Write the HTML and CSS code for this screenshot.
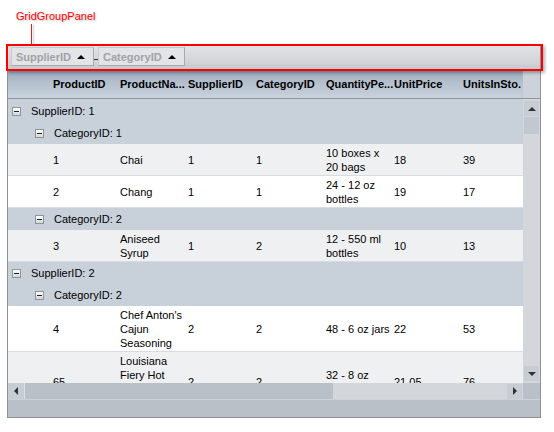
FILE: index.html
```html
<!DOCTYPE html>
<html>
<head>
<meta charset="utf-8">
<link rel="stylesheet" href="styles.css">
</head>
<body>
<div class="callout">
  <div class="callout-label">GridGroupPanel</div>
  <div class="callout-line"></div>
</div>
<div class="grid">
  <div class="group-panel">
    <div class="gp-btn"><span>SupplierID</span><span class="tri-up"></span></div>
    <div class="gp-dash"></div>
    <div class="gp-btn"><span>CategoryID</span><span class="tri-up"></span></div>
  </div>
  <div class="highlight"></div>
  <div class="header">
    <div class="cols">
      <div class="c"></div>
      <div class="c">ProductID</div>
      <div class="c">ProductNa...</div>
      <div class="c">SupplierID</div>
      <div class="c">CategoryID</div>
      <div class="c">QuantityPe...</div>
      <div class="c">UnitPrice</div>
      <div class="c">UnitsInSto.</div>
    </div>
    <div class="hdr-corner"></div>
  </div>
  <div class="body">
    <div class="rows">
      <div class="grp lvl1"><span class="exp"></span>SupplierID: 1</div>
      <div class="grp lvl2"><span class="exp"></span>CategoryID: 1</div>
      <div class="row alt cols">
        <div class="c"></div><div class="c">1</div><div class="c">Chai</div><div class="c">1</div><div class="c">1</div><div class="c">10 boxes x<br>20 bags</div><div class="c">18</div><div class="c">39</div>
      </div>
      <div class="row cols">
        <div class="c"></div><div class="c">2</div><div class="c">Chang</div><div class="c">1</div><div class="c">1</div><div class="c">24 - 12 oz<br>bottles</div><div class="c">19</div><div class="c">17</div>
      </div>
      <div class="grp lvl2"><span class="exp"></span>CategoryID: 2</div>
      <div class="row alt cols">
        <div class="c"></div><div class="c">3</div><div class="c">Aniseed<br>Syrup</div><div class="c">1</div><div class="c">2</div><div class="c">12 - 550 ml<br>bottles</div><div class="c">10</div><div class="c">13</div>
      </div>
      <div class="grp lvl1"><span class="exp"></span>SupplierID: 2</div>
      <div class="grp lvl2"><span class="exp"></span>CategoryID: 2</div>
      <div class="row cols">
        <div class="c"></div><div class="c">4</div><div class="c">Chef Anton's<br>Cajun<br>Seasoning</div><div class="c">2</div><div class="c">2</div><div class="c">48 - 6 oz jars</div><div class="c">22</div><div class="c">53</div>
      </div>
      <div class="row alt cols">
        <div class="c"></div><div class="c">65</div><div class="c">Louisiana<br>Fiery Hot<br>Pepper<br>Sauce</div><div class="c">2</div><div class="c">2</div><div class="c">32 - 8 oz<br>bottles</div><div class="c">21.05</div><div class="c">76</div>
      </div>
    </div>
    <div class="vscroll">
      <div class="sb-btn"><span class="tri-up dark"></span></div>
      <div class="vthumb"></div>
      <div class="vtrack"></div>
      <div class="sb-btn"><span class="tri-down"></span></div>
    </div>
  </div>
  <div class="hscroll">
    <div class="hbar">
      <div class="sb-btn h"><span class="tri-left"></span></div>
      <div class="hthumb"></div>
      <div class="htrack"></div>
      <div class="sb-btn h"><span class="tri-right"></span></div>
    </div>
    <div class="corner"></div>
  </div>
  <div class="footer"></div>
</div>
</body>
</html>
```

FILE: styles.css
```css
html, body {
  margin: 0;
  padding: 0;
  background: #ffffff;
}
body {
  font-family: "Liberation Sans", Arial, sans-serif;
  font-size: 11px;
  color: #000;
  width: 554px;
  height: 432px;
  overflow: hidden;
}
.callout {
  height: 44px;
  position: relative;
}
.callout-label {
  padding: 9px 0 0 16px;
  height: 15px;
  line-height: 15px;
  color: #ff0000;
  text-shadow: 1px 1px 2px rgba(0,0,0,0.25);
}
.callout-line {
  margin-left: 31px;
  width: 1px;
  height: 20px;
  background: #e02020;
  box-shadow: 2px 1px 2px rgba(0,0,0,0.25);
}
.grid {
  position: relative;
  margin-left: 7px;
  width: 532px;
  border: 1px solid #8c9298;
  border-top: none;
}
.group-panel {
  height: 26px;
  box-sizing: border-box;
  padding: 3px 0 0 3px;
  display: flex;
  align-items: flex-start;
  background: linear-gradient(#e4e5e7, #d2d4d7 70%, #c3c7cb);
}
.gp-btn {
  height: 19px;
  box-sizing: border-box;
  display: flex;
  align-items: center;
  padding: 0 8px 0 4px;
  gap: 6px;
  background: #e3e4e6;
  border: 1px solid #a7abb0;
  border-top-color: #c8cbce;
  border-left-color: #c8cbce;
  color: #9ea2a7;
  font-weight: bold;
}
.gp-dash {
  width: 4px;
  height: 1px;
  background: #333;
  margin-top: 12px;
}
.tri-up {
  width: 0;
  height: 0;
  border-left: 4px solid transparent;
  border-right: 4px solid transparent;
  border-bottom: 4px solid #000;
}
.tri-up.dark { border-bottom-color: #2e3338; }
.tri-down {
  width: 0;
  height: 0;
  border-left: 4px solid transparent;
  border-right: 4px solid transparent;
  border-top: 4px solid #2e3338;
}
.tri-left {
  width: 0;
  height: 0;
  border-top: 4px solid transparent;
  border-bottom: 4px solid transparent;
  border-right: 4px solid #2e3338;
}
.tri-right {
  width: 0;
  height: 0;
  border-top: 4px solid transparent;
  border-bottom: 4px solid transparent;
  border-left: 4px solid #2e3338;
}
.highlight {
  position: absolute;
  left: -2px;
  top: 0px;
  width: 537px;
  height: 27px;
  box-sizing: border-box;
  border: 2px solid #ff0000;
  box-shadow: 2px 2px 3px rgba(0,0,0,0.3);
  pointer-events: none;
}
.cols {
  display: grid;
  grid-template-columns: 45px 67px 68px 68px 70px 68px 69px 60px;
}
.c {
  white-space: nowrap;
  line-height: 14px;
  align-self: center;
}
.header {
  display: flex;
  height: 28px;
  border-bottom: 1px solid #8e959c;
  background: linear-gradient(#98a8bb, #b4c0ce 45%, #c9d2dc);
}
.header .cols {
  width: 515px;
  overflow: hidden;
  font-weight: bold;
  height: 28px;
  align-items: center;
}
.hdr-corner {
  width: 17px;
  background: #ccd2d9;
}
.body {
  display: flex;
  height: 284px;
  background: #c8d0da;
}
.rows {
  width: 515px;
  overflow: hidden;
  padding-top: 1px;
  box-sizing: border-box;
}
.grp {
  height: 22px;
  display: flex;
  align-items: center;
  line-height: 14px;
}
.grp.lvl1 { padding-left: 4px; }
.grp.lvl2 { padding-left: 27px; }
.exp {
  width: 9px;
  height: 9px;
  box-sizing: border-box;
  border: 1px solid #8f949a;
  background: linear-gradient(#ffffff, #d3d6da);
  position: relative;
  margin-right: 10px;
}
.exp::after {
  content: "";
  position: absolute;
  left: 1px;
  top: 3px;
  width: 5px;
  height: 1px;
  background: #222;
}
.row {
  background: #ffffff;
  border-bottom: 1px solid #d7dce2;
  padding: 2px 0 1px;
  align-items: center;
}
.row.alt {
  background: #eff0f2;
}
.vscroll {
  width: 17px;
  background: #d3d7dc;
  display: flex;
  flex-direction: column;
  align-items: center;
  padding: 2px 0 2px;
  box-sizing: border-box;
}
.sb-btn {
  width: 15px;
  height: 15px;
  background: #c7cdd3;
  display: flex;
  align-items: center;
  justify-content: center;
  flex: none;
}
.vthumb {
  width: 15px;
  height: 17px;
  margin-top: 1px;
  background: #c2c8cf;
}
.vtrack {
  flex: 1;
}
.hscroll {
  display: flex;
  height: 16px;
}
.hbar {
  width: 515px;
  display: flex;
  background: #d3d7dc;
  align-items: center;
}
.sb-btn.h {
  width: 16px;
  height: 16px;
  border-right: 1px solid #dde1e5;
}
.hbar .sb-btn.h:last-child {
  border-right: none;
  margin-right: 1px;
  height: 15px;
  width: 15px;
}
.hthumb {
  width: 308px;
  height: 16px;
  background: #b9c0c8;
}
.htrack {
  flex: 1;
}
.corner {
  width: 17px;
  background: #b9c0c8;
}
.footer {
  height: 17px;
  background: #b9c0c8;
  border-top: 1px solid #cdd2d8;
}
```
